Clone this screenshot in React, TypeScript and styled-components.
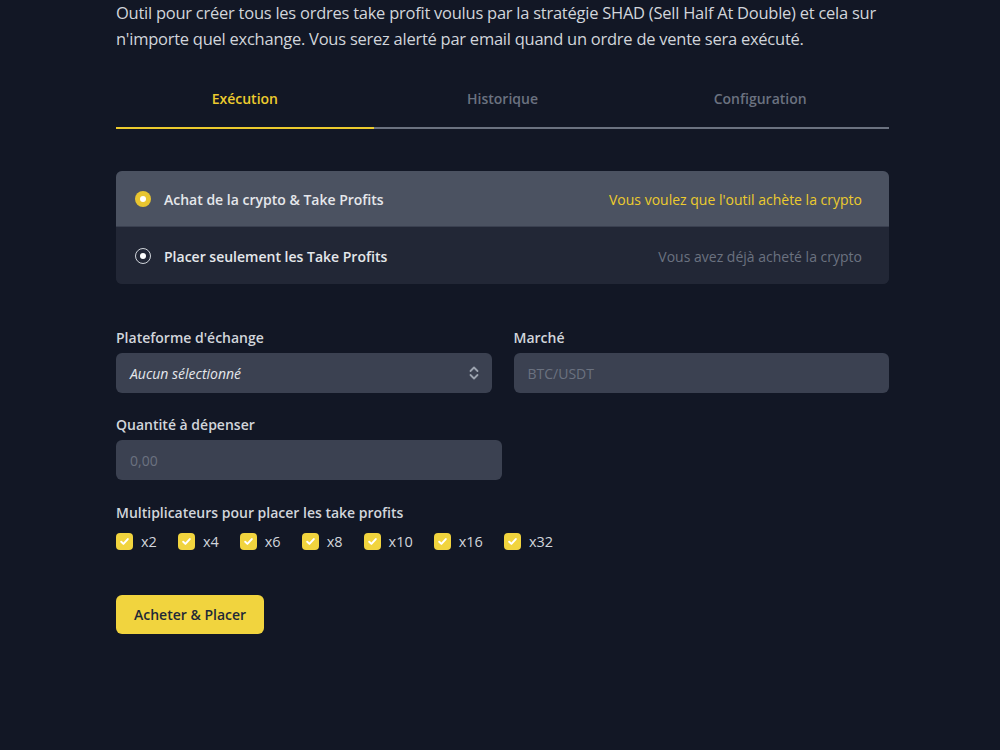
import React, { useState } from "react";
import styled, { createGlobalStyle } from "styled-components";

const Global = createGlobalStyle`
  html, body { margin: 0; padding: 0; background: #121725; }
  body { font-family: "Open Sans", "Noto Sans", sans-serif; color: #d1d5db; }
  * { box-sizing: border-box; }
`;

const Page = styled.div`
  width: 773px;
  margin-left: 116px;
  min-height: 750px;
`;

const Intro = styled.p`
  margin: 0;
  font-size: 16.5px;
  line-height: 26px;
  color: #d1d5db;
  letter-spacing: -0.25px;
`;

const Tabs = styled.div`
  display: grid;
  grid-template-columns: repeat(3, 1fr);
  margin-top: 23px;
  border-bottom: 2px solid #6b7280;
`;

const Tab = styled.div<{ $active?: boolean }>`
  text-align: center;
  font-size: 14px;
  font-weight: 600;
  height: 54px;
  line-height: 48px;
  color: ${(p) => (p.$active ? "#eccb2e" : "#6b7280")};
  box-shadow: ${(p) => (p.$active ? "inset 0 -2px 0 #eccb2e" : "none")};
  margin-bottom: -2px;
  padding-bottom: 2px;
`;

const Card = styled.div`
  margin-top: 42px;
  border-radius: 6px;
  overflow: hidden;
  background: #222736;
`;

const Row = styled.div<{ $selected?: boolean }>`
  display: flex;
  align-items: center;
  height: ${(p) => (p.$selected ? "56px" : "57px")};
  padding: 2px 27px 0 19px;
  background: ${(p) => (p.$selected ? "#4b5261" : "#222736")};
  border-bottom: ${(p) => (p.$selected ? "1px solid #3a4050" : "none")};
  cursor: pointer;
`;

const Radio = styled.span<{ $selected?: boolean }>`
  width: 16px;
  height: 16px;
  border-radius: 50%;
  flex: none;
  margin-top: -2px;
  display: flex;
  align-items: center;
  justify-content: center;
  background: ${(p) => (p.$selected ? "#e8c530" : "transparent")};
  border: ${(p) => (p.$selected ? "none" : "1.5px solid #d1d5db")};
  &::after {
    content: "";
    width: 6px;
    height: 6px;
    border-radius: 50%;
    background: #ffffff;
  }
`;

const RowTitle = styled.span`
  margin-left: 13px;
  font-size: 14px;
  font-weight: 600;
  color: #e5e7eb;
`;

const RowHint = styled.span<{ $selected?: boolean }>`
  margin-left: auto;
  font-size: 14px;
  color: ${(p) => (p.$selected ? "#eccb2e" : "#6b7280")};
`;

const Form = styled.div`
  margin-top: 44px;
  display: flex;
  flex-direction: column;
`;

const TwoCols = styled.div`
  display: grid;
  grid-template-columns: 1fr 1fr;
  column-gap: 22px;
`;

const Field = styled.div<{ $width?: string }>`
  display: flex;
  flex-direction: column;
  width: ${(p) => p.$width || "auto"};
`;

const Label = styled.label`
  font-size: 14px;
  font-weight: 600;
  color: #d1d5db;
  line-height: 20px;
  margin-bottom: 5px;
`;

const InputBox = styled.div`
  height: 40px;
  border-radius: 6px;
  background: #3b4151;
  display: flex;
  align-items: center;
  padding: 0 12px 0 14px;
  font-size: 14px;
`;

const SelectText = styled.span`
  font-style: italic;
  color: #e5e7eb;
`;

const Placeholder = styled.span`
  color: #6b7280;
`;

const Chevrons = styled.svg`
  margin-left: auto;
  width: 12px;
  height: 18px;
`;

const Spacer = styled.div<{ $h: number }>`
  height: ${(p) => p.$h}px;
`;

const Checks = styled.div`
  display: flex;
  gap: 21px;
  margin-top: 4px;
`;

const CheckItem = styled.label`
  display: flex;
  align-items: center;
  gap: 8px;
  font-size: 14.5px;
  font-weight: 500;
  color: #d1d5db;
`;

const CheckBox = styled.span`
  width: 17px;
  height: 17px;
  flex: none;
  border-radius: 4px;
  background: #f1d43e;
  display: flex;
  align-items: center;
  justify-content: center;
`;

const Button = styled.button`
  margin-top: 44px;
  align-self: flex-start;
  height: 39px;
  padding: 0 18px;
  border: none;
  border-radius: 6px;
  background: #f1d43e;
  color: #1f2937;
  font-family: inherit;
  font-size: 14px;
  font-weight: 600;
`;

const mults = ["x2", "x4", "x6", "x8", "x10", "x16", "x32"];

export default function App() {
  const [mode, setMode] = useState(0);
  return (
    <>
      <Global />
      <Page>
        <Intro>
          Outil pour créer tous les ordres take profit voulus par la stratégie SHAD (Sell Half At Double) et cela sur
          n'importe quel exchange. Vous serez alerté par email quand un ordre de vente sera exécuté.
        </Intro>
        <Tabs>
          <Tab $active>Exécution</Tab>
          <Tab>Historique</Tab>
          <Tab>Configuration</Tab>
        </Tabs>
        <Card>
          <Row $selected={mode === 0} onClick={() => setMode(0)}>
            <Radio $selected={mode === 0} />
            <RowTitle>Achat de la crypto &amp; Take Profits</RowTitle>
            <RowHint $selected={mode === 0}>Vous voulez que l'outil achète la crypto</RowHint>
          </Row>
          <Row $selected={mode === 1} onClick={() => setMode(1)}>
            <Radio $selected={mode === 1} />
            <RowTitle>Placer seulement les Take Profits</RowTitle>
            <RowHint $selected={mode === 1}>Vous avez déjà acheté la crypto</RowHint>
          </Row>
        </Card>
        <Form>
          <TwoCols>
            <Field>
              <Label>Plateforme d'échange</Label>
              <InputBox>
                <SelectText>Aucun sélectionné</SelectText>
                <Chevrons viewBox="0 0 12 18" fill="none" stroke="#9ca3af" strokeWidth="1.8" strokeLinecap="round" strokeLinejoin="round">
                  <path d="M2.5 7l3.5-3.5 3.5 3.5" />
                  <path d="M2.5 11l3.5 3.5 3.5-3.5" />
                </Chevrons>
              </InputBox>
            </Field>
            <Field>
              <Label>Marché</Label>
              <InputBox>
                <Placeholder>BTC/USDT</Placeholder>
              </InputBox>
            </Field>
          </TwoCols>
          <Spacer $h={22} />
          <Field $width="386px">
            <Label>Quantité à dépenser</Label>
            <InputBox>
              <Placeholder>0,00</Placeholder>
            </InputBox>
          </Field>
          <Spacer $h={23} />
          <Label>Multiplicateurs pour placer les take profits</Label>
          <Checks>
            {mults.map((m) => (
              <CheckItem key={m}>
                <CheckBox>
                  <svg width="11" height="11" viewBox="0 0 10 10" fill="none" stroke="#ffffff" strokeWidth="1.8" strokeLinecap="round" strokeLinejoin="round">
                    <path d="M2 5.2l2 2 4-4.4" />
                  </svg>
                </CheckBox>
                {m}
              </CheckItem>
            ))}
          </Checks>
          <Button>Acheter &amp; Placer</Button>
        </Form>
      </Page>
    </>
  );
}
